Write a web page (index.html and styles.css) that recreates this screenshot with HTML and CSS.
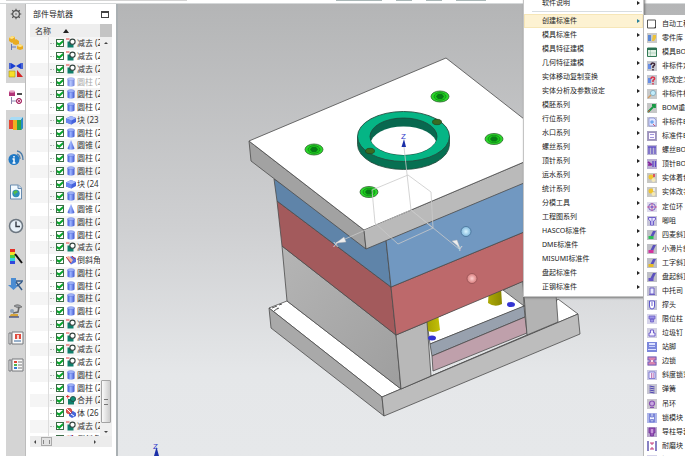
FILE: index.html
```html
<!DOCTYPE html>
<html lang="zh">
<head>
<meta charset="utf-8">
<title>部件导航器</title>
<link rel="stylesheet" href="styles.css">
</head>
<body>
<svg class="defs" aria-hidden="true">
  <defs>
    <linearGradient id="cylg"><stop offset="0" stop-color="#3d57d8"/><stop offset=".45" stop-color="#9db4ff"/><stop offset="1" stop-color="#4056d0"/></linearGradient>
    <symbol id="cyl" viewBox="0 0 10 10"><path d="M1.5 2v6.500c1 1.500 6 1.500 7 0V2z" fill="url(#cylg)"/><ellipse cx="5" cy="2" rx="3.500" ry="1.300" fill="#a9bbfa" stroke="#5068d8" stroke-width=".5"/></symbol>
    <symbol id="cone" viewBox="0 0 10 10"><path d="M5 0 1.500 8.500c1 1.600 6 1.600 7 0z" fill="url(#cylg)"/></symbol>
    <symbol id="block" viewBox="0 0 10 10"><path d="M0 3.500 5 1l5 2v4L5.500 9.500 0 7.500z" fill="#4663dc"/><path d="M0 3.500 5 1l5 2-4.500 2.500z" fill="#a5b8fb"/><path d="M0 3.500 5.500 5.500v4L0 7.500z" fill="#6984ef"/></symbol>
    <symbol id="sub" viewBox="0 0 10 10"><path d="M0 1h3.500" stroke="#e23b3b"/><path d="M1.500 3.500h6V9.500h-6z" fill="#0f7f6b"/><circle cx="6.500" cy="3.700" r="2.600" fill="#fff" stroke="#34443f" stroke-width="1.100"/></symbol>
    <symbol id="uni" viewBox="0 0 10 10"><path d="M0 1.500h3.500M1.700 0v3.500" stroke="#e23b3b"/><path d="M2 4h6V9.500H2z" fill="#0f7f6b"/><circle cx="7" cy="4" r="2.600" fill="#0f8c76" stroke="#24443c" stroke-width=".8"/></symbol>
    <symbol id="chamfer" viewBox="0 0 10 10"><path d="M1 3 6 1l4 2v4L5 9.500 3 7z" fill="#5a70df"/><path d="M0 2l3-1 4 4-2 3z" fill="#f2b6a0"/><path d="M0 2l5 6M6 1l3 3" stroke="#c93838"/></symbol>
    <symbol id="body" viewBox="0 0 10 10"><path d="M3 4l4-1 3 2v3L6 10 3 8z" fill="#4968da"/><circle cx="3" cy="3" r="2.800" fill="#e15b55" stroke="#b92020" stroke-width=".6"/><path d="M1 1l4 4M5 6l3 2" stroke="#fff"/></symbol>
    <symbol id="lib" viewBox="0 0 10 10"><path d="M0 0h10v10H0z" fill="#c9c9ca"/><path d="M1 2h3v6H1z" fill="#5b88d6"/><path d="M6 2h3v3L7 8H5z" fill="#ecc23a"/></symbol>
    <symbol id="sheet" viewBox="0 0 10 10"><path d="M.5 1h9v8.500h-9z" fill="#e1f0e4" stroke="#327a55"/><path d="M0 1h10v2H0z" fill="#2c7152"/><path d="M3.500 3v6M1 6h8" stroke="#86b79d" stroke-width=".5"/></symbol>
    <symbol id="quest" viewBox="0 0 10 10"><path d="M0 0h10v10H0z" fill="#c6c8d0"/><path d="M1 3h3v5H1z" fill="#678ee5"/><path d="M4 4c0-3 4.500-2 3.500 0L6 5.500V7M6 8v1.500" fill="none" stroke="currentColor" stroke-width="1.500"/></symbol>
    <symbol id="find" viewBox="0 0 10 10"><path d="M0 0h10v10H0z" fill="#c8cacb"/><circle cx="6" cy="4" r="2.600" fill="#c1ecfb" stroke="#8bb0c1"/><path d="M4 6 1 9" stroke="#cf9b66" stroke-width="1.500"/></symbol>
    <symbol id="bill" viewBox="0 0 10 10"><path d="M0 0h10v10H0z" fill="#c6c6d2"/><path d="M2 1h5l2 2v6H2z" fill="#e3e6ff" stroke="#7d86d6" stroke-width=".7"/><circle cx="5" cy="5" r="1.800" fill="#6fa7ee"/><path d="M6 7l2 2" stroke="#d0566e"/></symbol>
    <symbol id="pen" viewBox="0 0 10 10"><path d="M0 0h10v10H0z" fill="#c6c7c7"/><path d="M1 9l6-6M5 2h3v3" stroke="#189944" stroke-width="1.800" fill="none"/><path d="M1 9l2-2" stroke="#d44"/></symbol>
    <symbol id="frame" viewBox="0 0 10 10"><path d="M0 0h10v10H0z" fill="#a6a0c0"/><path d="M1.500 1.500h7v7h-7z" fill="#fcf7ff" stroke="#7c6aad" stroke-width=".6"/><path d="M3 3.500h4M3 6.500h4" stroke="currentColor" stroke-width=".6"/></symbol>
    <symbol id="guide" viewBox="0 0 10 10"><path d="M0 0h10v10H0z" fill="#b9a8cc"/><path d="M2 1h6v5H6.500v3h-3V6H2z" fill="#9a55b8" stroke="#6c2d92" stroke-width=".7"/><path d="M4 3h2M4 5h2" stroke="#f3dcfa"/></symbol>
    <symbol id="cols" viewBox="0 0 10 10"><path d="M0 0h10v10H0z" fill="#bcb8d3"/><path d="M1 2h8M2 2v7M5 2v7M8 2v7" stroke="currentColor" stroke-width="1.300"/></symbol>
    <symbol id="ejector" viewBox="0 0 10 10"><path d="M0 0h10v10H0z" fill="#b9aed2"/><path d="M1 3l4 3M1 6h3" stroke="#86229c" stroke-width="1.600"/><path d="M6 2v6M8.500 2v6" stroke="#5c45c4" stroke-width="1.300"/></symbol>
    <symbol id="taper" viewBox="0 0 10 10"><path d="M0 0h10v10H0z" fill="#c9c8e2"/><path d="M2 2h6v6.500H2z" fill="#f4f2ff" stroke="#6f68cf" stroke-width=".8"/><path d="M4.500 3v5M6.200 3v5" stroke="#b04a9a" stroke-width=".7"/></symbol>
    <symbol id="paint" viewBox="0 0 10 10"><path d="M0 0h10v10H0z" fill="#c8c8c4"/><circle cx="4" cy="4" r="2.500" fill="#f0c52f"/><circle cx="6.500" cy="7" r="2" fill="#f4e9b8"/><path d="M7 1v3" stroke="currentColor" stroke-width="1.500"/></symbol>
    <symbol id="target" viewBox="0 0 10 10"><path d="M0 0h10v10H0z" fill="#dddaeb"/><circle cx="5" cy="5" r="3.400" fill="none" stroke="#745dc2"/><path d="M0 5h10M5 1v8" stroke="#d15393" stroke-width=".8"/><circle cx="5" cy="5" r="1.300" fill="#8069ce"/></symbol>
    <symbol id="bush" viewBox="0 0 10 10"><path d="M0 0h10v10H0z" fill="#c7c5d8"/><path d="M1.500 1.500h7v2L6.500 5v4h-3V5l-2-1.500z" fill="#e9e6ff" stroke="#6350c7" stroke-width=".9"/><path d="M5 2v6" stroke="#6350c7" stroke-width=".7"/></symbol>
    <symbol id="lockblock" viewBox="0 0 10 10"><path d="M0 0h10v10H0z" fill="#aeb6e8"/><path d="M2.500 1v8h5V1h-1v3h-3V1zM3.500 9V6.500h3V9" fill="#f4f6ff" stroke="#5a66cf" stroke-width=".7"/></symbol>
    <symbol id="lift" viewBox="0 0 10 10"><path d="M0 0h10v10H0z" fill="#bfc0c6"/><path d="M6 1h3L6 7H3z" fill="#5b51bd"/><path d="M1.500 6h5v3h-5z" fill="currentColor"/></symbol>
    <symbol id="pillar" viewBox="0 0 10 10"><path d="M0 0h10v10H0z" fill="#c3c3d2"/><path d="M3 2h4v6H3zM2 8.500h6" fill="#e9ebff" stroke="#6658c3" stroke-width=".9"/></symbol>
    <symbol id="shield" viewBox="0 0 10 10"><path d="M0 0h10v10H0z" fill="#c3c4d7"/><path d="M2.500 1h5v5q0 3-2.500 3T2.500 6z" fill="#fff" stroke="#5f58cb"/><path d="M5 2v4" stroke="#6f63d2"/></symbol>
    <symbol id="stop" viewBox="0 0 10 10"><path d="M0 0h10v10H0z" fill="#d6d4ea"/><path d="M2 2h6v3H2zM3.500 5h3v3h-3z" fill="#9d94e7" stroke="#6658c3" stroke-width=".7"/></symbol>
    <symbol id="pin" viewBox="0 0 10 10"><path d="M0 0h10v10H0z" fill="#d1cfe2"/><path d="M3.500 2h3v3h1.500v3H2V5h1.500z" fill="#f2efff" stroke="#6855c9" stroke-width=".9"/></symbol>
    <symbol id="foot" viewBox="0 0 10 10"><path d="M0 0h10v10H0z" fill="#7b87dc"/><path d="M2 1h6v2H2zM1 7h8v1H1z" fill="#dce1ff"/><path d="M2 4.500h6" stroke="#c8cffb"/></symbol>
    <symbol id="lock" viewBox="0 0 10 10"><path d="M0 0h10v10H0z" fill="#d8c8e2"/><path d="M1 1h8v3H7v2h2v3H1V6h2V4H1z" fill="#d984ae" stroke="#6659bf" stroke-width=".8"/><circle cx="5" cy="5" r="1" fill="#fff"/></symbol>
    <symbol id="spring" viewBox="0 0 10 10"><path d="M0 0h10v10H0z" fill="#c7c6d2"/><path d="M2.500 2 7.500 3M2.500 4l5 1M2.500 6l5 1M2.500 8l5 1" stroke="#5145b2" stroke-width="1.200"/></symbol>
    <symbol id="ringbolt" viewBox="0 0 10 10"><path d="M0 0h10v10H0z" fill="#c9c5cd"/><circle cx="5" cy="4.500" r="2.500" fill="#c8a7e0" stroke="#8850b2" stroke-width="1.200"/><path d="M3 8.500h4" stroke="#8850b2"/></symbol>
    <symbol id="wear" viewBox="0 0 10 10"><path d="M0 0h10v10H0z" fill="#8781c4"/><path d="M2 0h6v10H2z" fill="#fff"/><path d="M3 2h4M5 2v2M5 6v2M3 8h4" stroke="#c23678"/></symbol>
  </defs>
</svg>
<div class="app">
  <header class="ribbon" aria-hidden="true"><i class="line"></i><i class="field wide"></i><i class="field"></i><i class="field"></i><i class="field mid"></i></header>
  <div class="work">
    <nav class="rail" aria-label="资源条">
      <button class="gear" aria-label="设置"><svg viewBox="0 0 16 16"><circle cx="8" cy="8" r="4.500" fill="none" stroke="#4d4d4d" stroke-width="1.500"/><path d="M8 1v3M8 12v3M1 8h3M12 8h3M3 3l2 2M11 11l2 2M3 13l2-2M11 5l2-2" stroke="#4d4d4d" stroke-width="1.500"/><circle cx="8" cy="8" r="1" fill="#555"/></svg></button>
      <button aria-label="装配导航器"><svg viewBox="0 0 16 16"><path d="M1 3 4 1l3 1v4L4 8 1 6zM5 6l3-2 3 2v3l-3 1-3-1zM9 11l3-2 3 2v3l-3 1-3-1z" fill="#e9ac21"/><path d="M1 3l3 1 3-2-3-1zM9 11l3 1 3-1-3-2z" fill="#ffe486"/><path d="M3.500 9v6M3.500 12H8" stroke="#6778b8"/></svg></button>
      <button aria-label="约束导航器"><svg viewBox="0 0 16 16"><path d="M3 1v6l5-3zM13 1v6L8 4z" fill="#193ed2"/><path d="M2 1v6M14 1v6" stroke="#193ed2" stroke-width="1.500"/><path d="M1 9h6v6H1z" fill="#f6df27" stroke="#a79614" stroke-width=".6"/><path d="M9 8l6 7H9z" fill="#d52423"/></svg></button>
      <button class="active" aria-label="部件导航器"><svg viewBox="0 0 16 16"><path d="M1 2.500h6V7H1z" fill="#b23578"/><ellipse cx="4" cy="2.500" rx="3" ry="1.300" fill="#e5a4c4"/><path d="M9 5h5" stroke="#222" stroke-width="1.600"/><path d="M3.500 8v7M3.500 12H8" stroke="#8b86ae"/><circle cx="11" cy="12" r="2.600" fill="#f2cade" stroke="#a32761"/><path d="M9 10l4 4M13 10l-4 4" stroke="#a32761" stroke-width=".8"/></svg></button>
      <button aria-label="重用库"><svg viewBox="0 0 16 16"><path d="M1 4l2-2h3v11H1z" fill="#e6462f"/><path d="M5 4l2-2h3v12H5z" fill="#efb120"/><path d="M9 4l2-2h4v10l-2 2H9z" fill="#2ca64a"/><path d="M1 4l2-3h12l-2 3z" fill="#a8dbf5"/><path d="M13 4l2-3v11l-2 2z" fill="#2989c8"/></svg></button>
      <button class="tall first" aria-label="HD3D 工具"><svg viewBox="0 0 16 16"><circle cx="6" cy="9.500" r="5.500" fill="#1f78c5"/><path d="M6 6v1.500M4.500 9H6v4M4.500 13h3" stroke="#fff" stroke-width="1.500" fill="none"/><path d="M9 1q6 1 6 9M9 4q3 1 3 5" fill="none" stroke="#4a7ba9" stroke-width="1.300"/></svg></button>
      <button class="tall" aria-label="Web 浏览器"><svg viewBox="0 0 16 16"><path d="M2.500 1h8l3 3v11h-11z" fill="#f3faff" stroke="#688baf"/><path d="M10 1v3.500h3.500" fill="#cbdced" stroke="#688baf"/><circle cx="8" cy="9.500" r="3.700" fill="#2c8ebd"/><path d="M5 8l3-2 2 2-3 2 1 3z" fill="#55bd48"/></svg></button>
      <button class="tall" aria-label="历史记录"><svg viewBox="0 0 16 16"><circle cx="8" cy="8" r="6.500" fill="#e6eff7" stroke="#6c7680" stroke-width="1.500"/><path d="M8 3.500V8.500h4" fill="none" stroke="#343b44" stroke-width="1.400"/></svg></button>
      <button aria-label="系统材料"><svg viewBox="0 0 16 16"><path d="M2 0h5v3H2z" fill="#e52f25"/><path d="M2 3h5v3H2z" fill="#f6dc2c"/><path d="M2 6h5v3H2z" fill="#49cf42"/><path d="M2 9h5v3H2z" fill="#31cfe1"/><path d="M2 12h5v3H2z" fill="#3146db"/><path d="M7 5l7 9" stroke="#111" stroke-width="2"/></svg></button>
      <button aria-label="加工向导"><svg viewBox="0 0 16 16"><path d="M3 2h5v7h3L5.500 14 0 9h3z" fill="#4b8cd2"/><path d="M8 5h7M8 6l6 8M9 10l5-4" stroke="#345b8a" stroke-width="1.500"/></svg></button>
      <button aria-label="机器人"><svg viewBox="0 0 16 16"><path d="M6 3q4-3 8 1l-4 1z" fill="#9a9da1" stroke="#555" stroke-width=".6"/><path d="M11 4l-1 5-5 1" fill="none" stroke="#666" stroke-width="1.500"/><circle cx="4" cy="8" r="2" fill="#8fa1b5"/><path d="M3 11h7v3H1z" fill="#d6a43b"/><path d="M1 14h10" stroke="#515c8d" stroke-width="1.500"/></svg></button>
      <button aria-label="角色"><svg viewBox="0 0 16 16"><path d="M1 3h2v11H1zM4 2h11v12H4z" fill="#fafafa" stroke="#77797d"/><path d="M7 4h6v5H7z" fill="#e04b3e"/><path d="M10 5v4" stroke="#fff" stroke-width="1.500"/><path d="M6 11h7" stroke="#36699e"/></svg></button>
      <button aria-label="图层"><svg viewBox="0 0 16 16"><path d="M1 3h2v11H1zM4 2h11v12H4z" fill="#fafafa" stroke="#77797d"/><path d="M6 4h3v2H6z" fill="#df4537"/><path d="M6 7h3v2H6z" fill="#52b34c"/><path d="M6 10h3v2H6z" fill="#347dd0"/><path d="M10 5h4M10 8h4M10 11h4" stroke="#777"/></svg></button>
    </nav>
    <aside class="panel">
      <div class="title"><h1>部件导航器</h1><button aria-label="最大化"></button></div>
      <button class="colhead">名称<i></i></button>
      <div class="treewrap">
        <ul class="tree">
          <li><label><input type="checkbox" checked><svg><use href="#sub"/></svg>减去 (2</label></li>
          <li><label><input type="checkbox" checked><svg><use href="#sub"/></svg>减去 (2</label></li>
          <li><label><input type="checkbox" checked><svg><use href="#sub"/></svg>减去 (2</label></li>
          <li class="dim"><label><input type="checkbox" checked><svg><use href="#cyl"/></svg>圆柱 (2</label></li>
          <li><label><input type="checkbox" checked><svg><use href="#cyl"/></svg>圆柱 (2</label></li>
          <li><label><input type="checkbox" checked><svg><use href="#cyl"/></svg>圆柱 (2</label></li>
          <li><label><input type="checkbox" checked><svg><use href="#block"/></svg>块 (23</label></li>
          <li><label><input type="checkbox" checked><svg><use href="#cyl"/></svg>圆柱 (2</label></li>
          <li><label><input type="checkbox" checked><svg><use href="#cone"/></svg>圆锥 (2</label></li>
          <li><label><input type="checkbox" checked><svg><use href="#cyl"/></svg>圆柱 (2</label></li>
          <li><label><input type="checkbox" checked><svg><use href="#cyl"/></svg>圆柱 (2</label></li>
          <li><label><input type="checkbox" checked><svg><use href="#block"/></svg>块 (24</label></li>
          <li><label><input type="checkbox" checked><svg><use href="#cyl"/></svg>圆柱 (2</label></li>
          <li><label><input type="checkbox" checked><svg><use href="#cone"/></svg>圆锥 (2</label></li>
          <li><label><input type="checkbox" checked><svg><use href="#cyl"/></svg>圆柱 (2</label></li>
          <li><label><input type="checkbox" checked><svg><use href="#cyl"/></svg>圆柱 (2</label></li>
          <li><label><input type="checkbox" checked><svg><use href="#sub"/></svg>减去 (2</label></li>
          <li><label><input type="checkbox" checked><svg><use href="#chamfer"/></svg>倒斜角</label></li>
          <li><label><input type="checkbox" checked><svg><use href="#cyl"/></svg>圆柱 (2</label></li>
          <li><label><input type="checkbox" checked><svg><use href="#cyl"/></svg>圆柱 (2</label></li>
          <li><label><input type="checkbox" checked><svg><use href="#cyl"/></svg>圆柱 (2</label></li>
          <li><label><input type="checkbox" checked><svg><use href="#cyl"/></svg>圆柱 (2</label></li>
          <li><label><input type="checkbox" checked><svg><use href="#sub"/></svg>减去 (2</label></li>
          <li><label><input type="checkbox" checked><svg><use href="#sub"/></svg>减去 (2</label></li>
          <li><label><input type="checkbox" checked><svg><use href="#sub"/></svg>减去 (2</label></li>
          <li><label><input type="checkbox" checked><svg><use href="#sub"/></svg>减去 (2</label></li>
          <li><label><input type="checkbox" checked><svg><use href="#cyl"/></svg>圆柱 (2</label></li>
          <li><label><input type="checkbox" checked><svg><use href="#cyl"/></svg>圆柱 (2</label></li>
          <li><label><input type="checkbox" checked><svg><use href="#uni"/></svg>合并 (2</label></li>
          <li><label><input type="checkbox" checked><svg><use href="#body"/></svg>体 (26</label></li>
          <li><label><input type="checkbox" checked><svg><use href="#sub"/></svg>减去 (2</label></li>
          <li><label><input type="checkbox" checked><svg><use href="#chamfer"/></svg>倒斜角</label></li>
        </ul>
        <div class="vbar" aria-hidden="true"><i class="up"></i><i class="space"></i><b></b><i class="down"></i></div>
      </div>
      <div class="hbar" aria-hidden="true"><i class="prev"></i><b></b><i class="next"></i></div>
    </aside>
    <main class="view">
      <svg class="model" viewBox="118 4 567 452" preserveAspectRatio="xMinYMin slice" role="img" aria-label="模架三维模型">
        <defs>
          <radialGradient id="hb"><stop offset="0" stop-color="#d8f4ff"/><stop offset="1" stop-color="#7fb7dc"/></radialGradient>
          <radialGradient id="hr"><stop offset="0" stop-color="#ffd0cf"/><stop offset="1" stop-color="#d87c7c"/></radialGradient>
          <linearGradient id="yp"><stop offset="0" stop-color="#a3a000"/><stop offset=".45" stop-color="#f1ee14"/><stop offset="1" stop-color="#8b8800"/></linearGradient>
          <linearGradient id="sg" x1="0" y1="0" x2="1" y2="1"><stop offset="0" stop-color="#b5b5b5"/><stop offset="1" stop-color="#9e9e9e"/></linearGradient>
          <clipPath id="inner"><ellipse cx="403.500" cy="136.500" rx="33.500" ry="18.500"/></clipPath>
          <g id="screw"><ellipse rx="9" ry="5.500" fill="#2ad92a" stroke="#315f31" stroke-width=".8"/><ellipse rx="6" ry="3.800" fill="#18c818" stroke="#14841b" stroke-width=".8"/><path d="M-4 0l2-2.500h4L4 0 2 2.500h-4z" fill="#087c16"/></g>
        </defs>
        <g stroke="#4b4b4b" stroke-width=".8" stroke-linejoin="round">
          <path d="M269 308 287 301 401 389 431 376 527 335 558 299 578 314 382 397z" fill="#fff"/>
          <path d="M269 308 382 397 384 416 271 328z" fill="#a9a9a9"/>
          <path d="M382 397 578 314 580 334 384 416z" fill="#bdbdbd"/>
          <path d="M427 322 503 288 525 306 430 344z" fill="#fff"/>
          <path d="M503 290 523 281 524 306z" fill="#aaa"/>
          <path d="M430 344 524 306 525 317 432 356z" fill="#98a1ae"/>
          <path d="M432 356 525 317 527 333 433 371z" fill="#bfa0ab"/>
          <path d="M523 281 555 280 558 322 527 335z" fill="#b3b3b3"/>
          <path d="M489 288l-1 15q7 5 14 1l-1-16zM427 314l-1 16q7 4 14 0l-2-16z" fill="url(#yp)" stroke="none"/>
          <path d="M282 246 396 335 401 389 287 301z" fill="url(#sg)"/>
          <path d="M396 335 427 322 431 376 401 389z" fill="#b8b8b8"/>
          <path d="M277 201 391 287 396 335 282 246z" fill="#a35a5c"/>
          <path d="M391 287 524 232V281L396 335z" fill="#bd696b"/>
          <path d="M274 179 366 240 386 240 391 287 277 201z" fill="#5f84a9"/>
          <path d="M386 240 524 182V232L391 287z" fill="#7198c1"/>
          <path d="M249 141 364 230 366 249 251 161z" fill="#a2a2a2"/>
          <path d="M364 230 524 162V183L366 249z" fill="#bababa"/>
          <path d="M249 141 446 58 524 119V162L364 230z" fill="#fff"/>
        </g>
        <ellipse cx="432" cy="338" rx="4" ry="2.500" fill="#3434d2"/><ellipse cx="511" cy="304.500" rx="4" ry="2.500" fill="#3434d2"/>
        <circle cx="466" cy="231.500" r="5" fill="url(#hb)" stroke="#41698e" stroke-width=".7"/>
        <circle cx="472" cy="278.500" r="5" fill="url(#hr)" stroke="#8b4d4f" stroke-width=".7"/>
        <use href="#screw" x="314" y="149.500"/><use href="#screw" x="440" y="96.500"/><use href="#screw" x="494" y="139"/><use href="#screw" x="369" y="192"/>
        <path d="M357.500 136.500v8a46 25 0 0 0 92 0v-8z" fill="#077052" stroke="#24483b" stroke-width=".8"/>
        <ellipse cx="403.500" cy="136.500" rx="46" ry="25" fill="#05b585" stroke="#244f41" stroke-width=".9"/>
        <ellipse cx="403.500" cy="136.500" rx="33.500" ry="18.500" fill="#08684f" stroke="#204438" stroke-width=".8"/>
        <ellipse cx="403.500" cy="144.500" rx="33" ry="18" fill="#fff" clip-path="url(#inner)"/>
        <g fill="#386b22" stroke="#273d1b" stroke-width=".7"><ellipse cx="370" cy="151" rx="4.500" ry="2.700"/><ellipse cx="437" cy="122" rx="4.500" ry="2.700"/></g>
        <g fill="none" stroke="#c9c9c9" stroke-width=".8"><path d="M404 147 411 210 459 249M408 175 372 190 375 223 398 244 433 228 431 192zM433 228 411 210 336 243"/></g>
        <path d="M344 237l-8 6 10-1zM452 241l8 7-3-8z" fill="#eee" stroke="#b8b8b8" stroke-width=".4"/>
        <path d="M401.500 147 404 139l2 8zM154 456l2.500-9 2.500 9z" fill="#1b2fa8"/>
        <text class="axis" x="401" y="139">Z</text><text class="axis" x="153" y="449">Z</text>
        <text class="axis pale" x="333" y="247">X</text><text class="axis pale" x="457" y="251">Y</text>
        <path d="M272 308l5-2M274 311l4-3M279 305l3-1M277 309l2-1" stroke="#555"/>
      </svg>
    </main>
  </div>
  <div class="menu main-menu" role="menu">
    <button role="menuitem">软件说明</button>
    <hr>
    <button role="menuitem" class="open">创建标准件</button>
    <button role="menuitem">模具标准件</button>
    <button role="menuitem">模具特征建模</button>
    <button role="menuitem">几何特征建模</button>
    <button role="menuitem">实体移动复制变换</button>
    <button role="menuitem">实体分析及参数设定</button>
    <button role="menuitem">模胚系列</button>
    <button role="menuitem">行位系列</button>
    <button role="menuitem">水口系列</button>
    <button role="menuitem">螺丝系列</button>
    <button role="menuitem">顶针系列</button>
    <button role="menuitem">运水系列</button>
    <button role="menuitem">统计系列</button>
    <button role="menuitem">分模工具</button>
    <button role="menuitem">工程图系列</button>
    <button role="menuitem">HASCO标准件</button>
    <button role="menuitem">DME标准件</button>
    <button role="menuitem">MISUMI标准件</button>
    <button role="menuitem">盘起标准件</button>
    <button role="menuitem">正钢标准件</button>
  </div>
  <div class="menu sub-menu" role="menu">
    <button role="menuitem"><svg viewBox="0 0 10 10"><path d="M.5 1h8v8h-8z" fill="#fff" stroke="#555"/><path d="M7 9l2-2v2z" fill="#333"/></svg>自动工程图</button>
    <button role="menuitem"><svg><use href="#lib"/></svg>零件库</button>
    <button role="menuitem"><svg><use href="#sheet"/></svg>模具BOM</button>
    <button role="menuitem"><svg class="dark"><use href="#quest"/></svg>非标件定义</button>
    <button role="menuitem"><svg class="red"><use href="#quest"/></svg>修改定义</button>
    <button role="menuitem"><svg><use href="#find"/></svg>非标件标注</button>
    <button role="menuitem"><svg><use href="#pen"/></svg>BOM重排</button>
    <button role="menuitem"><svg><use href="#bill"/></svg>非标件BOM</button>
    <button role="menuitem"><svg class="violet"><use href="#frame"/></svg>标准件BOM</button>
    <button role="menuitem"><svg class="violet"><use href="#cols"/></svg>螺丝BOM</button>
    <button role="menuitem"><svg><use href="#ejector"/></svg>顶针BOM</button>
    <button role="menuitem"><svg class="red"><use href="#paint"/></svg>实体着色</button>
    <button role="menuitem"><svg class="pale"><use href="#paint"/></svg>实体改名</button>
    <button role="menuitem"><svg><use href="#target"/></svg>定位环</button>
    <button role="menuitem"><svg><use href="#bush"/></svg>唧咀</button>
    <button role="menuitem"><svg class="green"><use href="#lift"/></svg>四麦斜顶</button>
    <button role="menuitem"><svg class="pink"><use href="#lift"/></svg>小滑片斜顶</button>
    <button role="menuitem"><svg class="gold"><use href="#lift"/></svg>工字斜顶</button>
    <button role="menuitem"><svg class="violet"><use href="#lift"/></svg>盘起斜顶</button>
    <button role="menuitem"><svg><use href="#pillar"/></svg>中托司</button>
    <button role="menuitem"><svg><use href="#shield"/></svg>撑头</button>
    <button role="menuitem"><svg><use href="#stop"/></svg>限位柱</button>
    <button role="menuitem"><svg><use href="#pin"/></svg>垃圾钉</button>
    <button role="menuitem"><svg><use href="#foot"/></svg>站脚</button>
    <button role="menuitem"><svg><use href="#lock"/></svg>边锁</button>
    <button role="menuitem"><svg><use href="#taper"/></svg>斜度锁紧</button>
    <button role="menuitem"><svg><use href="#spring"/></svg>弹簧</button>
    <button role="menuitem"><svg><use href="#ringbolt"/></svg>吊环</button>
    <button role="menuitem"><svg><use href="#lockblock"/></svg>锁模块</button>
    <button role="menuitem"><svg><use href="#guide"/></svg>导柱导套</button>
    <button role="menuitem"><svg><use href="#wear"/></svg>耐磨块</button>
    <button role="menuitem"><svg><use href="#stop"/></svg>滑块</button>
  </div>
</div>
</body>
</html>
```
FILE: styles.css
```css
* { box-sizing: border-box; }
body {
  margin: 0;
  font: 8px/12px "Noto Sans", "Noto Sans CJK SC", sans-serif;
  color: #333;
  background: #fff;
}
button {
  margin: 0;
  padding: 0;
  border: 0;
  background: none;
  font: inherit;
  color: inherit;
}
.defs { position: absolute; width: 0; height: 0; }
.app {
  position: relative;
  display: flex;
  flex-direction: column;
  height: 100vh;
  overflow: hidden;
}
.ribbon {
  display: flex;
  flex: 0 0 4px;
  gap: 14px;
  padding-left: 6px;
  border-bottom: 1px solid #d5d8d9;
}
.ribbon i { height: 1px; background: #abb8b8; }
.ribbon .line { width: 181px; margin-right: 135px; background: #d4d4d4; }
.ribbon .field { width: 16px; }
.ribbon .wide { width: 46px; }
.ribbon .mid { width: 30px; }
.work { display: flex; flex: 1; min-height: 0; }

.rail {
  display: flex;
  flex-direction: column;
  flex: 0 0 20px;
  min-width: 0;
  margin-left: 6px;
  background: #d4d4d4;
  border-right: 1px solid #bcbcbc;
}
.rail button {
  display: grid;
  flex: none;
  place-items: center;
  height: 27px;
}
.rail .gear { height: 25px; padding-bottom: 6px; }
.rail .tall { height: 34px; }
.rail .first { margin-top: 4px; }
.rail .active { background: #fff; }
.rail svg { width: 16px; height: 16px; }
.rail .gear svg { width: 12px; height: 12px; }

.panel {
  display: flex;
  flex-direction: column;
  flex: 0 0 92px;
  min-width: 0;
  padding: 0 4px 9px;
  background: #fff;
  border-right: 2px solid #aab0b3;
}
.title {
  display: flex;
  align-items: center;
  justify-content: space-between;
  flex: 0 0 20px;
  padding: 0 3px;
}
.title h1 { margin: 0; font: inherit; color: #222; }
.title button { width: 8px; height: 7px; border: 1px solid #444; border-top-width: 2px; }
.colhead {
  display: flex;
  align-items: center;
  flex: 0 0 13px;
  gap: 12px;
  padding-left: 5px;
  background: linear-gradient(90deg, #eee 70px, #c4c4c4 70px);
}
.colhead i { border: 3px solid transparent; border-top: 0; border-bottom: 4px solid #222; }
.treewrap { display: flex; flex: 1; min-height: 0; }
.tree {
  flex: 1;
  min-width: 0;
  margin: 0;
  padding: 0;
  list-style: none;
  overflow: hidden;
}
.tree li {
  height: 13px;
  padding-left: 19px;
  background: linear-gradient(90deg, transparent 18px, #ddd 18px, #ddd 19px, transparent 19px);
  white-space: nowrap;
  overflow: hidden;
}
.tree li:nth-child(4n) { height: 12px; }
.tree li:nth-child(odd) { background-color: #f5f5f5; }
.tree label { display: flex; align-items: center; gap: 2px; height: 12px; }
.tree label::before { content: ""; flex: none; width: 4px; margin-left: 1px; border-top: 1px dotted #bbb; }
.tree svg { flex: none; width: 10px; height: 10px; margin-right: -1px; }
.tree .dim { color: #aaa; }
.tree .dim svg { opacity: .75; }
.tree input {
  appearance: none;
  flex: none;
  width: 8px;
  height: 8px;
  margin: 0;
  border: 1px solid #3b6b46;
  background: #fff;
}
.tree input:checked::before {
  content: "";
  display: block;
  width: 6px;
  height: 6px;
  background: #08a62c;
  clip-path: polygon(0 35%, 35% 55%, 100% 0, 100% 40%, 40% 100%, 0 75%);
}
.vbar {
  display: flex;
  flex-direction: column;
  align-items: center;
  flex: 0 0 12px;
  padding: 5px 0 3px;
  background: #efefef;
}
.vbar .space { flex: 1; }
.vbar b {
  display: grid;
  place-items: center;
  width: 10px;
  height: 43px;
  margin-bottom: 8px;
  border: 1px solid #a3a3a3;
  border-radius: 1px;
  background: linear-gradient(90deg, #fafafa, #ccc);
}
.vbar b::before { content: ""; width: 4px; height: 4px; border: solid #777; border-width: 1px 0; }
.up, .down, .prev, .next { width: 0; border: 2px solid transparent; }
.up { border-top: 0; border-bottom-color: #444; }
.down { border-bottom: 0; border-top-color: #444; }
.hbar {
  display: flex;
  align-items: center;
  flex: 0 0 11px;
  gap: 5px;
  padding: 0 16px 0 4px;
  background: #ececec;
}
.prev { border-left: 0; border-right-color: #444; }
.next { margin-left: auto; border-right: 0; border-left-color: #444; }
.hbar b {
  display: grid;
  place-items: center;
  width: 11px;
  height: 9px;
  border: 1px solid #aaa;
  background: #e2e2e2;
}
.hbar b::before { content: ""; width: 5px; height: 4px; border: solid #888; border-width: 0 1px; }

.view {
  flex: 1;
  min-width: 0;
  background: linear-gradient(#b4b5b6, #cfd0d2 50%, #e5e7e9 82%, #e6e8ea);
}
.model { display: block; width: 100%; height: 100%; }
.axis { font: 8px "Liberation Sans", sans-serif; fill: #2b35c9; }
.axis.pale { fill: #e4e4e4; }

.menu {
  position: absolute;
  display: flex;
  flex-direction: column;
  background: #fff;
  font-size: 7px;
  line-height: 14px;
  color: #222;
}
.menu button {
  display: flex;
  align-items: center;
  flex: none;
  height: 14px;
  text-align: left;
  white-space: nowrap;
}
.main-menu {
  top: -4px;
  left: 523px;
  width: 121px;
  padding-bottom: 2px;
  border: 1px solid #c4c4c4;
  border-top: 0;
  box-shadow: 1px 1px 2px #777;
}
.main-menu button { justify-content: space-between; padding: 0 3px 0 18px; }
.main-menu button::after {
  content: "";
  border: 2px solid transparent;
  border-right: 0;
  border-left: 3px solid #222;
}
.main-menu .open { background: #fdf2d2; box-shadow: inset 0 0 0 1px #f6e6b7; }
.main-menu .open::after { border-left-color: #27809a; }
.main-menu hr { width: 110px; margin: 1px auto 2px 8px; border: 0; border-top: 1px solid #d8dde0; }
.sub-menu {
  top: 15px;
  left: 643px;
  right: 0;
  bottom: 0;
  padding: 2px 0 0 3px;
  border-left: 1px solid #b9b9b9;
  overflow: hidden;
}
.sub-menu button { gap: 5px; }
.sub-menu button:nth-child(14n) { height: 15px; }
.sub-menu svg { flex: none; width: 10px; height: 10px; }
.dark { color: #3c2438; }
.red { color: #dc3048; }
.violet { color: #6555c7; }
.pale { color: #f5f5f5; }
.green { color: #2bbd56; }
.pink { color: #d3349e; }
.gold { color: #e7bc27; }
```
